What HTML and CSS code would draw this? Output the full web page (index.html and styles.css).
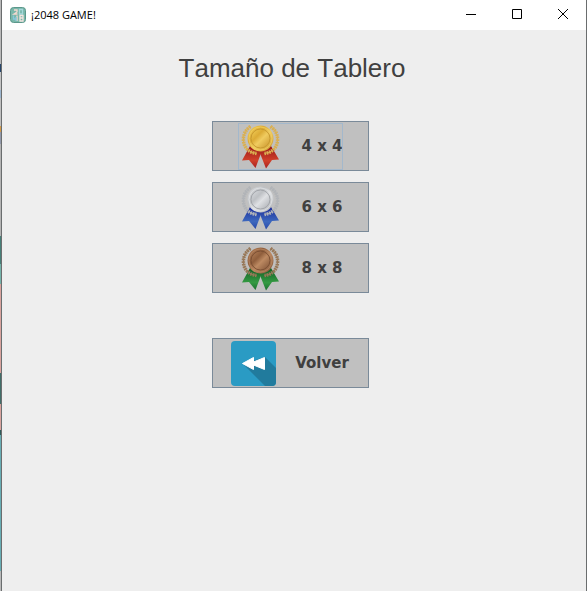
FILE: index.html
```html
<!DOCTYPE html>
<html lang="es">
<head>
<meta charset="utf-8">
<meta name="viewport" content="width=device-width, initial-scale=1">
<title>¡2048 GAME!</title>
<link rel="stylesheet" href="styles.css">
</head>
<body>
<svg class="defs" aria-hidden="true">
  <defs>
    <linearGradient id="gold" x1="0" y1="0" x2="1" y2="1"><stop offset="0" stop-color="#f4d25c"/><stop offset=".35" stop-color="#dcab35"/><stop offset=".55" stop-color="#f0cc60"/><stop offset="1" stop-color="#c8922a"/></linearGradient>
    <linearGradient id="silver" x1="0" y1="0" x2="1" y2="1"><stop offset="0" stop-color="#dcdee2"/><stop offset=".35" stop-color="#bdc0c4"/><stop offset=".55" stop-color="#dfe1e4"/><stop offset="1" stop-color="#a8abb0"/></linearGradient>
    <linearGradient id="bronze" x1="0" y1="0" x2="1" y2="1"><stop offset="0" stop-color="#b8845c"/><stop offset=".35" stop-color="#8f5e3c"/><stop offset=".55" stop-color="#bd8a62"/><stop offset="1" stop-color="#7c5034"/></linearGradient>
    <linearGradient id="red" x1="0" y1="0" x2="0" y2="1"><stop offset="0" stop-color="#981818"/><stop offset=".65" stop-color="#d0402a"/><stop offset="1" stop-color="#a82020"/></linearGradient>
    <linearGradient id="blue" x1="0" y1="0" x2="0" y2="1"><stop offset="0" stop-color="#1c2c98"/><stop offset=".65" stop-color="#3d68be"/><stop offset="1" stop-color="#2848a8"/></linearGradient>
    <linearGradient id="green" x1="0" y1="0" x2="0" y2="1"><stop offset="0" stop-color="#125c24"/><stop offset=".65" stop-color="#349a42"/><stop offset="1" stop-color="#1b7030"/></linearGradient>
    <g id="ribbon">
      <path d="M12 23 4 37.500 11 37 17.500 45 23.500 29 19 24Z"/>
      <path d="M33 23 41 36.500 34 37 28 45.500 21.500 29 26 24Z"/>
    </g>
    <g id="laurel" fill="none">
      <path d="M12.500 3.500C4 9 3.500 20 9 26Q13 30 18.500 30.500M32.500 3.500C41 9 41.500 20 36 26Q32 30 26.500 30.500" stroke-width="3.500" stroke-dasharray="1.700 .8"/>
      <path d="M12.500 3.500C4 9 3.500 20 9 26Q13 30 18.500 30.500M32.500 3.500C41 9 41.500 20 36 26Q32 30 26.500 30.500" stroke-width="1"/>
    </g>
  </defs>
</svg>
<div class="window">
  <header class="titlebar">
    <svg class="app-icon" viewBox="0 0 16 16" aria-hidden="true">
      <rect x=".5" y=".5" width="15" height="15" rx="3" fill="#79b7aa" stroke="#5b978b"/>
      <g fill="none" stroke-width="1.300">
        <path d="M4 3h3v2L4 7h3.500M7 8.500V14" stroke="#f6d9d0"/>
        <path d="M9.500 2.500h3v4.500h-3z" stroke="#a5d8dc"/>
        <path d="M10 8.500h3V14h-3zM10 11h3" stroke="#f4e4df"/>
        <path d="M3.500 8.500v3.500h3M6 10v4" stroke="#87c8dc"/>
      </g>
    </svg>
    <span class="caption">¡2048 GAME!</span>
    <div class="controls">
      <button type="button" class="control" aria-label="Minimizar"><svg viewBox="0 0 12 12"><path d="M1 6.500H11"/></svg></button>
      <button type="button" class="control" aria-label="Maximizar"><svg viewBox="0 0 12 12"><path d="M1.500 1.500h9v9h-9z"/></svg></button>
      <button type="button" class="control" aria-label="Cerrar"><svg viewBox="0 0 12 12"><path d="m1 1 10 10M11 1 1 11"/></svg></button>
    </div>
  </header>
  <main class="menu">
    <h1 class="heading">Tamaño de Tablero</h1>
    <div class="choices">
      <div class="options">
        <button type="button" class="option">
          <span class="content focused">
            <svg class="icon" viewBox="0 0 45 47" aria-hidden="true">
              <use href="#ribbon" fill="url(#red)"/><use href="#laurel" stroke="#dab052"/>
              <circle cx="22.500" cy="15.500" r="13" fill="url(#gold)"/><circle cx="22.500" cy="15.500" r="9.500" fill="url(#gold)" stroke="#c89a30"/><circle cx="22.500" cy="15.500" r="11.500" fill="none" stroke="#f0cf62" stroke-width=".8"/>
            </svg>
            <span>4 x 4</span>
          </span>
        </button>
        <button type="button" class="option">
          <span class="content">
            <svg class="icon" viewBox="0 0 45 47" aria-hidden="true">
              <use href="#ribbon" fill="url(#blue)"/><use href="#laurel" stroke="#b1b4b8"/>
              <circle cx="22.500" cy="15.500" r="13" fill="url(#silver)"/><circle cx="22.500" cy="15.500" r="9.500" fill="url(#silver)" stroke="#a2a5aa"/><circle cx="22.500" cy="15.500" r="11.500" fill="none" stroke="#e2e3e5" stroke-width=".8"/>
            </svg>
            <span>6 x 6</span>
          </span>
        </button>
        <button type="button" class="option">
          <span class="content">
            <svg class="icon" viewBox="0 0 45 47" aria-hidden="true">
              <use href="#ribbon" fill="url(#green)"/><use href="#laurel" stroke="#987858"/>
              <circle cx="22.500" cy="15.500" r="13" fill="url(#bronze)"/><circle cx="22.500" cy="15.500" r="9.500" fill="url(#bronze)" stroke="#7c5034"/><circle cx="22.500" cy="15.500" r="11.500" fill="none" stroke="#b78662" stroke-width=".8"/>
            </svg>
            <span>8 x 8</span>
          </span>
        </button>
      </div>
      <button type="button" class="option">
        <span class="content">
          <svg class="icon" viewBox="0 0 45 47" aria-hidden="true">
            <rect y="1" width="45" height="45" rx="4" fill="#2a9bc4"/>
            <path d="M12 24 34 17 45 28V42Q45 46 41 46H34Z" fill="#217b9d"/>
            <path d="M11.500 23.500 22.500 17.500V22L33.500 17.500V29.500L22.500 25V29.500Z" fill="#fff" stroke="#fff" stroke-linejoin="round"/>
          </svg>
          <span>Volver</span>
        </span>
      </button>
    </div>
  </main>
</div>
</body>
</html>
```
FILE: styles.css
```css
* {
  box-sizing: border-box;
}

body {
  margin: 0;
  padding-left: 1px;
  /* sliver of the desktop behind the window */
  background: linear-gradient(#b9b9b9 0 64px, #26456b 64px 72px, #c4c4c4 72px 90px, #9db6cf 90px 98px, #c0c0c0 98px 126px, #d29b4c 126px 132px, #9299ab 132px 144px, #b4b4b4 144px 236px, #477f78 236px 264px, #74b3aa 264px 284px, #d9a39e 284px 373px, #416e69 373px 404px, #d9a39e 404px 430px, #2f5a58 430px 435px, #68adb4 435px 571px, #b9b9b9 571px);
}

.defs {
  position: absolute;
  width: 0;
  height: 0;
}

.window {
  display: flex;
  flex-direction: column;
  min-height: 100vh;
  border: solid #6a6d6e;
  border-width: 0 1px;
  background: #eee;
}

.titlebar {
  display: flex;
  align-items: center;
  height: 30px;
  padding-left: 8px;
  background: #fff;
}

.app-icon {
  width: 16px;
  height: 16px;
  margin-right: 5px;
}

.caption {
  font: 11px/16px "Open Sans", "Noto Sans", sans-serif;
  color: #000;
}

.controls {
  display: flex;
  align-self: stretch;
  margin-left: auto;
}

.control {
  display: grid;
  place-items: center;
  width: 46px;
  padding: 0 0 2px;
  border: 0;
  background: none;
}

.control svg {
  width: 12px;
  height: 12px;
  fill: none;
  stroke: #000;
}

.menu {
  display: flex;
  flex-direction: column;
  align-items: center;
  padding: 22px 4px 0 0;
}

.heading {
  margin: 0 0 37px;
  font: 26px/32px "Liberation Sans", Arial, sans-serif;
  font-kerning: none;
  color: #404040;
}

.choices {
  display: grid;
  gap: 45px;
  padding-right: 4px;
}

.options {
  display: grid;
  gap: 11px;
}

.option {
  display: flex;
  align-items: center;
  justify-content: center;
  width: 157px;
  height: 50px;
  padding: 0;
  border: 1px solid #7a8a99;
  background: #c0c0c0;
  font: bold 15px/20px "DejaVu Sans", Verdana, sans-serif;
  color: #404040;
}

.content {
  display: flex;
  align-items: center;
  gap: 19px;
}

.focused {
  outline: 1px solid #a3b8cc;
  outline-offset: -1px;
}

.icon {
  width: 45px;
  height: 47px;
}
```
